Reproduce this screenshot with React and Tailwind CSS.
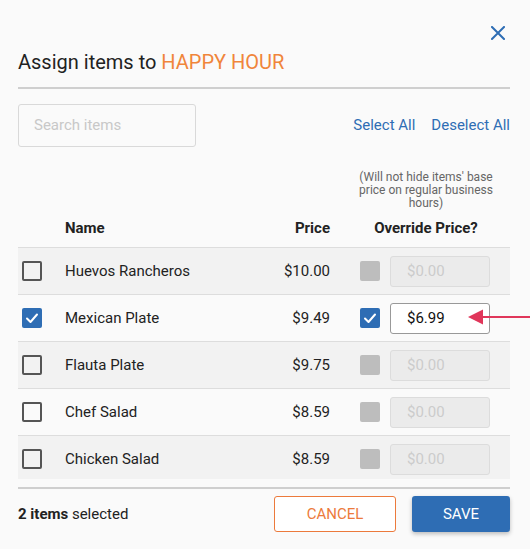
import React from "react";

const rows = [
  { name: "Huevos Rancheros", price: "$10.00", checked: false, override: "$0.00" },
  { name: "Mexican Plate", price: "$9.49", checked: true, override: "$6.99" },
  { name: "Flauta Plate", price: "$9.75", checked: false, override: "$0.00" },
  { name: "Chef Salad", price: "$8.59", checked: false, override: "$0.00" },
  { name: "Chicken Salad", price: "$8.59", checked: false, override: "$0.00" },
];

function Check() {
  return (
    <svg width="20" height="20" viewBox="0 0 20 20">
      <rect x="0" y="0" width="20" height="20" rx="2" fill="#2e6db4" />
      <path d="M5 10.5 L8.5 14 L15 6.5" fill="none" stroke="#fff" strokeWidth="2" strokeLinecap="round" strokeLinejoin="round" />
    </svg>
  );
}

export default function App() {
  return (
    <div className="relative w-[530px] h-[549px] overflow-hidden bg-[#fafafa] font-['Roboto',sans-serif] text-[#222]">
      <div className="pl-[18px] pr-[20px]">
        <div className="flex justify-end pt-[26px] pr-[5px]">
          <svg width="14" height="14" viewBox="0 0 14 14">
            <path d="M1 1 L13 13 M13 1 L1 13" stroke="#2e6db4" strokeWidth="2" strokeLinecap="square" />
          </svg>
        </div>
        <div className="mt-[8px] text-[20px] leading-[28px]">
          Assign items to <span className="text-[#f0853b]">HAPPY HOUR</span>
        </div>
        <div className="mt-[11px] h-[2px] bg-[#cfcfcf]" />
        <div className="mt-[15px] flex items-center justify-between">
          <div className="w-[178px] h-[43px] border border-[#d9d9d9] rounded-[3px] flex items-center pl-[15px] text-[15px] text-[#c8c8c8]">
            Search items
          </div>
          <div className="flex gap-[16px] text-[15px] text-[#2e6db4]">
            <span>Select All</span>
            <span>Deselect All</span>
          </div>
        </div>
        <div className="mt-[24px] flex">
          <div className="flex-1" />
          <div className="w-[180px] pl-[12px] flex justify-center">
            <div className="w-[140px] text-center text-[12px] leading-[13px] text-[#666]">
              (Will not hide items' base price on regular business hours)
            </div>
          </div>
        </div>
        <div className="flex items-center h-[38px] border-b border-[#dddddd] text-[15px] font-bold">
          <div className="w-[47px]" />
          <div className="flex-1">Name</div>
          <div className="text-right">Price</div>
          <div className="w-[180px] pl-[12px] text-center">Override Price?</div>
        </div>
        <div className="h-[231px] overflow-hidden">
          {rows.map((r, i) => (
            <div
              key={r.name}
              className={`flex items-center h-[47px] border-b border-[#dddddd] text-[15px] ${i % 2 === 0 ? "bg-[#f2f2f2]" : "bg-[#fafafa]"}`}
            >
              <div className="w-[47px] pl-[4px] flex items-center">
                {r.checked ? (
                  <Check />
                ) : (
                  <div className="w-[20px] h-[20px] border-2 border-[#555] rounded-[2px]" />
                )}
              </div>
              <div className="flex-1">{r.name}</div>
              <div className="text-right">{r.price}</div>
              <div className="w-[180px] flex items-center pl-[30px] gap-[10px]">
                {r.checked ? (
                  <Check />
                ) : (
                  <div className="w-[20px] h-[20px] bg-[#bdbdbd] rounded-[2px]" />
                )}
                {r.checked ? (
                  <div className="w-[100px] h-[31px] bg-white border border-[#999] rounded-[3px] flex items-center pl-[16px] text-[15px] text-[#111]">
                    {r.override}
                  </div>
                ) : (
                  <div className="w-[100px] h-[31px] bg-[#ebebeb] border border-[#dcdcdc] rounded-[3px] flex items-center pl-[16px] text-[15px] text-[#cccccc]">
                    {r.override}
                  </div>
                )}
              </div>
            </div>
          ))}
        </div>
        <div className="mt-[8px] h-[2px] bg-[#cfcfcf]" />
        <div className="mt-[7px] flex items-center justify-between">
          <div className="text-[15px]">
            <span className="font-bold">2 items</span> selected
          </div>
          <div className="flex gap-[16px]">
            <div className="w-[122px] h-[36px] border border-[#ec7a3c] rounded-[3px] bg-white flex items-center justify-center text-[15px] text-[#ec7a3c]">
              CANCEL
            </div>
            <div className="w-[98px] h-[36px] rounded-[3px] bg-[#2e6db4] shadow-[0_2px_4px_rgba(0,0,0,0.25)] flex items-center justify-center text-[15px] text-white">
              SAVE
            </div>
          </div>
        </div>
      </div>
      <svg className="absolute left-[466px] top-[308px]" width="64" height="18" viewBox="0 0 64 18">
        <path d="M2 9 L17 1.5 L17 16.5 Z" fill="#e0365a" />
        <path d="M15 9 L64 9" stroke="#e0365a" strokeWidth="2" />
      </svg>
    </div>
  );
}
